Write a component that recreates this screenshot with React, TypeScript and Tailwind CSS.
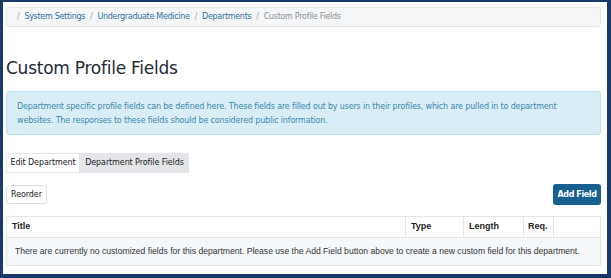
export default function App() {
  const ui = { fontFamily: '"DejaVu Sans", Verdana, sans-serif' };
  const helv = { fontFamily: '"Liberation Sans", Arial, sans-serif' };

  return (
    <div className="h-[278px] w-[611px] overflow-hidden border-t-[2px] border-l-[3px] border-r-[4px] border-b-[4px] border-[#173a6b] bg-white">
      <div className="pl-[3px] pr-[6px] pt-[5px]">
        {/* Breadcrumb */}
        <div
          className="flex h-[20px] items-center gap-[5px] rounded-[3px] border border-[#e3e5e8] bg-[#f5f6f8] pl-[10px] text-[8px] tracking-[-0.3px] text-[#9aa0a6]"
          style={ui}
        >
          <span>/</span>
          <span className="text-[#2f6f9f]">System Settings</span>
          <span>/</span>
          <span className="text-[#2f6f9f]">Undergraduate Medicine</span>
          <span>/</span>
          <span className="text-[#2f6f9f]">Departments</span>
          <span>/</span>
          <span className="text-[#8b9096]">Custom Profile Fields</span>
        </div>

        {/* Title */}
        <h1 className="mt-[30px] text-[17px] leading-[22px] tracking-[-0.25px] text-[#1d2b38]" style={ui}>
          Custom Profile Fields
        </h1>

        {/* Info alert */}
        <div
          className="mt-[12px] h-[44px] rounded-[3px] border border-[#bde2f0] bg-[#d9edf7] px-[10px] pt-[8px] text-[8px] leading-[14px] tracking-[-0.16px] text-[#3a87ad]"
          style={ui}
        >
          Department specific profile fields can be defined here. These fields are filled out by users in their profiles, which are pulled in to department websites. The responses to these fields should be considered public information.
        </div>

        {/* Tabs */}
        <div className="mt-[18px] flex h-[20px] text-[8px] tracking-[-0.1px] text-[#222]" style={ui}>
          <div className="flex w-[74px] items-center justify-center border border-[#e3e5e8] bg-white">
            Edit Department
          </div>
          <div className="flex w-[109px] items-center justify-center bg-[#e4e6e9]">
            Department Profile Fields
          </div>
        </div>

        {/* Buttons */}
        <div className="mt-[11px] flex items-center justify-between">
          <button
            className="flex h-[19px] w-[41px] items-center justify-center rounded-[3px] border border-[#dcdfe3] bg-white text-[8px] tracking-[-0.1px] text-[#222]"
            style={ui}
          >
            Reorder
          </button>
          <button
            className="flex h-[21px] w-[48px] items-center justify-center rounded-[3px] bg-[#175f8f] text-[8px] font-bold tracking-[-0.4px] text-white"
            style={ui}
          >
            Add Field
          </button>
        </div>

        {/* Table */}
        <div className="mt-[11px] border border-[#e4e6e9]" style={helv}>
          <div className="flex h-[20px] text-[9px] font-bold text-[#222]">
            <div className="flex w-[398px] items-center pl-[5px]">Title</div>
            <div className="flex w-[58px] items-center border-l border-[#e4e6e9] pl-[5px]">Type</div>
            <div className="flex w-[60px] items-center border-l border-[#e4e6e9] pl-[5px]">Length</div>
            <div className="flex w-[30px] items-center border-l border-[#e4e6e9] pl-[4px]">Req.</div>
            <div className="flex-1 border-l border-[#e4e6e9]"></div>
          </div>
          <div className="flex h-[28px] items-center whitespace-nowrap border-t border-[#e4e6e9] bg-[#f6f9fc] pl-[8px] text-[8.6px] text-[#333]">
            There are currently no customized fields for this department. Please use the Add Field button above to create a new custom field for this department.
          </div>
        </div>
      </div>
    </div>
  );
}
